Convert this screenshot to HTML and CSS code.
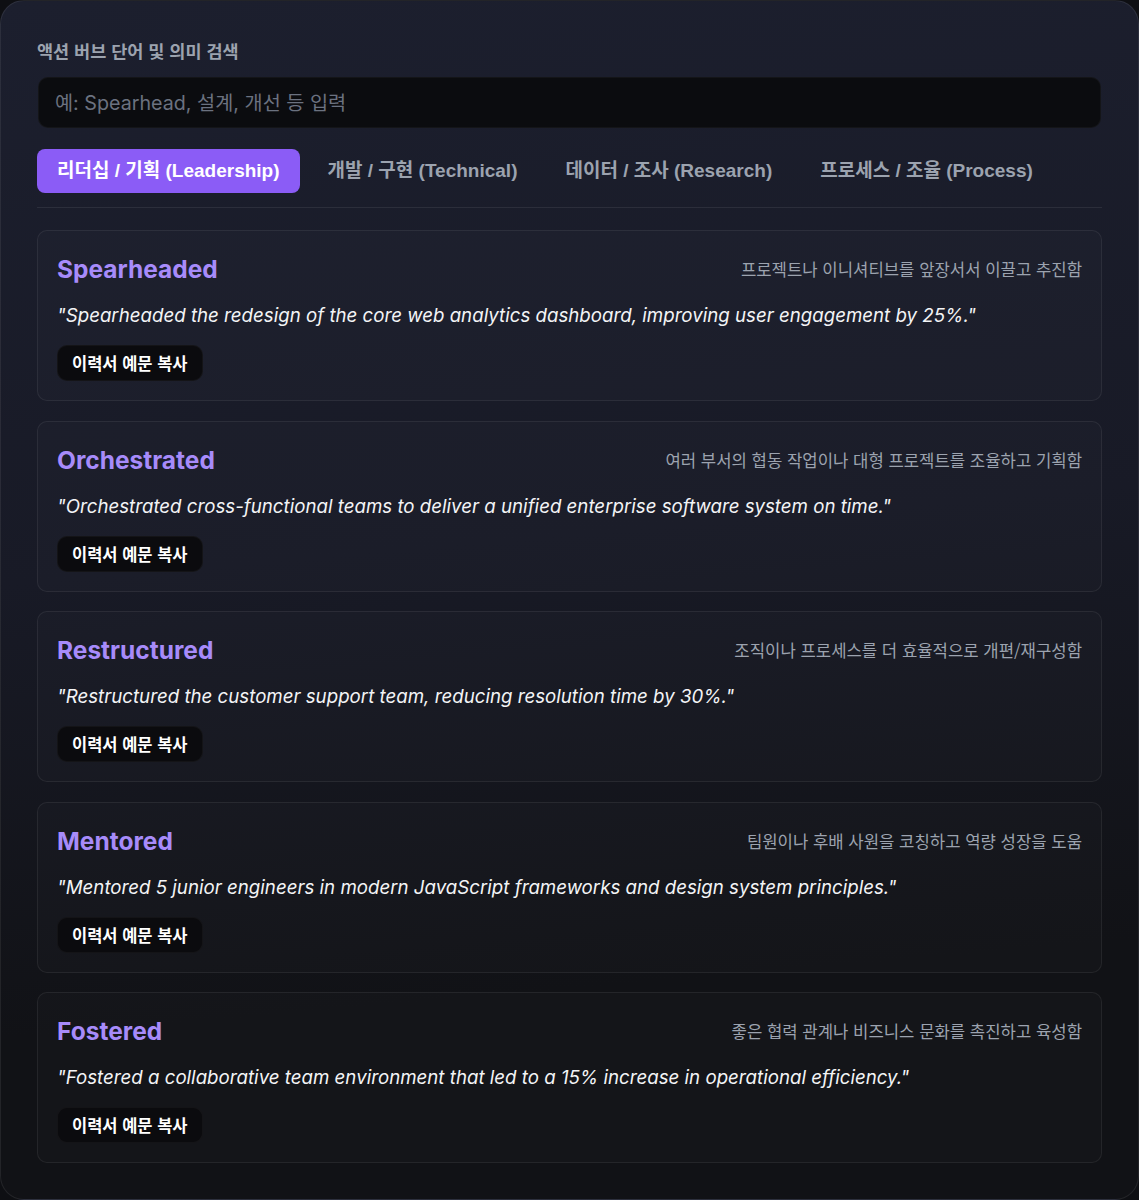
FILE: index.html
```html
<!DOCTYPE html>
<html lang="ko">
<head>
    <meta charset="UTF-8">
    <meta name="viewport" content="width=device-width, initial-scale=1.0">
    <title>액션 버브 사전</title>
    <link rel="stylesheet" href="styles.css">
</head>
<body>
    <div class="panel">
        <label class="search-label" for="verbSearch">액션 버브 단어 및 의미 검색</label>
        <input class="search-input" id="verbSearch" type="text" placeholder="예: Spearhead, 설계, 개선 등 입력">

        <div class="tabs">
            <button class="tab active">리더십 / 기획 (Leadership)</button>
            <button class="tab">개발 / 구현 (Technical)</button>
            <button class="tab">데이터 / 조사 (Research)</button>
            <button class="tab">프로세스 / 조율 (Process)</button>
        </div>

        <div class="verb-list">
            <div class="verb-card">
                <div class="verb-head">
                    <h3 class="verb-word">Spearheaded</h3>
                    <span class="verb-meaning">프로젝트나 이니셔티브를 앞장서서 이끌고 추진함</span>
                </div>
                <p class="verb-example">"Spearheaded the redesign of the core web analytics dashboard, improving user engagement by 25%."</p>
                <button class="copy-btn">이력서 예문 복사</button>
            </div>

            <div class="verb-card">
                <div class="verb-head">
                    <h3 class="verb-word">Orchestrated</h3>
                    <span class="verb-meaning">여러 부서의 협동 작업이나 대형 프로젝트를 조율하고 기획함</span>
                </div>
                <p class="verb-example">"Orchestrated cross-functional teams to deliver a unified enterprise software system on time."</p>
                <button class="copy-btn">이력서 예문 복사</button>
            </div>

            <div class="verb-card">
                <div class="verb-head">
                    <h3 class="verb-word">Restructured</h3>
                    <span class="verb-meaning">조직이나 프로세스를 더 효율적으로 개편/재구성함</span>
                </div>
                <p class="verb-example">"Restructured the customer support team, reducing resolution time by 30%."</p>
                <button class="copy-btn">이력서 예문 복사</button>
            </div>

            <div class="verb-card">
                <div class="verb-head">
                    <h3 class="verb-word">Mentored</h3>
                    <span class="verb-meaning">팀원이나 후배 사원을 코칭하고 역량 성장을 도움</span>
                </div>
                <p class="verb-example">"Mentored 5 junior engineers in modern JavaScript frameworks and design system principles."</p>
                <button class="copy-btn">이력서 예문 복사</button>
            </div>

            <div class="verb-card">
                <div class="verb-head">
                    <h3 class="verb-word">Fostered</h3>
                    <span class="verb-meaning">좋은 협력 관계나 비즈니스 문화를 촉진하고 육성함</span>
                </div>
                <p class="verb-example">"Fostered a collaborative team environment that led to a 15% increase in operational efficiency."</p>
                <button class="copy-btn">이력서 예문 복사</button>
            </div>
        </div>
    </div>
</body>
</html>
```

FILE: styles.css
```css
* {
    box-sizing: border-box;
}

body {
    margin: 0;
    padding: 0;
    background-color: #0e0f13;
    font-family: Inter, "Noto Sans CJK KR", sans-serif;
    color: #fff;
}

.panel {
    height: 1200px;
    padding: 38px 36px;
    border: 1px solid rgba(255, 255, 255, 0.08);
    border-radius: 24px;
    background: linear-gradient(175deg, #1c1f2e 0%, #181a26 45%, #111216 80%, #111216 100%);
}

.search-label {
    display: block;
    font-family: "Noto Sans CJK KR", sans-serif;
    font-size: 17.5px;
    font-weight: 700;
    line-height: 24px;
    color: #9ca3af;
    margin-bottom: 14px;
}

.search-input {
    display: block;
    width: calc(100% - 2px);
    height: 51px;
    margin-left: 1px;
    padding: 0 16px;
    border: 1px solid rgba(255, 255, 255, 0.04);
    border-radius: 10px;
    background: #0b0c0f;
    color: #fff;
    font-family: Inter, "Noto Sans CJK KR", sans-serif;
    font-size: 19.7px;
    outline: none;
}

.search-input::placeholder {
    color: #6b7280;
}

.tabs {
    display: flex;
    gap: 8px;
    margin-top: 21px;
    padding-bottom: 14px;
    border-bottom: 1px solid rgba(255, 255, 255, 0.08);
}

.tab {
    height: 44px;
    padding: 0 20px;
    border: none;
    border-radius: 8px;
    background: transparent;
    color: #9ca3af;
    font-family: "Liberation Sans", "Noto Sans CJK KR", sans-serif;
    font-size: 19px;
    font-weight: 700;
    line-height: 20px;
    cursor: pointer;
}

.tab.active {
    background: #8b5cf6;
    color: #fff;
}

.verb-list {
    display: flex;
    flex-direction: column;
    gap: 19.5px;
    margin-top: 22px;
}

.verb-card {
    padding: 19px;
    border: 1px solid rgba(255, 255, 255, 0.07);
    border-radius: 10px;
    background: rgba(255, 255, 255, 0.015);
}

.verb-head {
    display: flex;
    justify-content: space-between;
    align-items: center;
    height: 38px;
}

.verb-word {
    margin: 0;
    font-size: 24.5px;
    font-weight: 700;
    color: #a78bfa;
}

.verb-meaning {
    font-family: "Noto Sans CJK KR", sans-serif;
    font-size: 16.7px;
    color: #9ca3af;
}

.verb-example {
    margin: 14px 0 15px;
    font-size: 18.7px;
    line-height: 28px;
    font-style: italic;
    color: #f3f4f6;
}

.copy-btn {
    display: inline-block;
    height: 36px;
    padding: 0 14px;
    border: 1px solid rgba(255, 255, 255, 0.04);
    border-radius: 10px;
    background: #0b0b0e;
    color: #fff;
    font-family: "Noto Sans CJK KR", sans-serif;
    font-size: 16.5px;
    font-weight: 700;
    cursor: pointer;
}
```
